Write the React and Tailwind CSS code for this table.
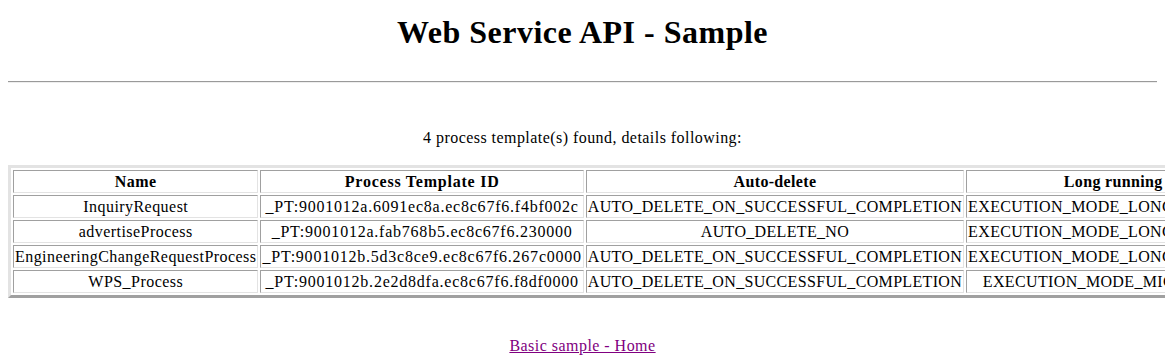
export default function App() {
  const rows = [
    ["InquiryRequest", "_PT:9001012a.6091ec8a.ec8c67f6.f4bf002c", "AUTO_DELETE_ON_SUCCESSFUL_COMPLETION", "EXECUTION_MODE_LONG_RUNNING"],
    ["advertiseProcess", "_PT:9001012a.fab768b5.ec8c67f6.230000", "AUTO_DELETE_NO", "EXECUTION_MODE_LONG_RUNNING"],
    ["EngineeringChangeRequestProcess", "_PT:9001012b.5d3c8ce9.ec8c67f6.267c0000", "AUTO_DELETE_ON_SUCCESSFUL_COMPLETION", "EXECUTION_MODE_LONG_RUNNING"],
    ["WPS_Process", "_PT:9001012b.2e2d8dfa.ec8c67f6.f8df0000", "AUTO_DELETE_ON_SUCCESSFUL_COMPLETION", "EXECUTION_MODE_MICROFLOW"],
  ];
  const headers = ["Name", "Process Template ID", "Auto-delete", "Long running"];
  const track = ["tracking-[0.45px]", "tracking-[0.77px]", "tracking-[0.33px]", "tracking-[0.35px]"];
  const cell =
    "border border-t-[#a0a0a0] border-l-[#a0a0a0] border-r-[#e3e3e3] border-b-[#e3e3e3] p-px text-center whitespace-nowrap leading-[19px]";

  return (
    <div className="w-full overflow-hidden bg-white text-black font-['Liberation_Serif','Times_New_Roman',serif] text-[16px]">
      <div className="px-2 pt-[14px] pb-4">
        <h1 className="text-center font-bold text-[32px] leading-[37px] tracking-[0.5px]">
          Web Service API - Sample
        </h1>
        <div className="mt-[30px] h-0 border-t border-t-[#9a9a9a] border-b border-b-[#eeeeee]" />
        <p className="mt-[46px] text-center leading-[18px] tracking-[0.45px]">
          4 process template(s) found, details following:
        </p>
        <table className="mt-[18px] border-separate border-spacing-[2px] border-[3px] border-t-[#e3e3e3] border-l-[#e3e3e3] border-r-[#a0a0a0] border-b-[#a0a0a0]">
          <thead>
            <tr>
              {headers.map((h, i) => (
                <th key={h} className={cell + " font-bold " + track[i]}>
                  {h}
                </th>
              ))}
            </tr>
          </thead>
          <tbody>
            {rows.map((r) => (
              <tr key={r[0]}>
                {r.map((v, i) => (
                  <td key={i} className={cell + " " + track[i]}>
                    {v}
                  </td>
                ))}
              </tr>
            ))}
          </tbody>
        </table>
        <p className="mt-[39px] text-center leading-[18px] tracking-[0.47px]">
          <a href="#" className="text-[#800080] underline">
            Basic sample - Home
          </a>
        </p>
      </div>
    </div>
  );
}
